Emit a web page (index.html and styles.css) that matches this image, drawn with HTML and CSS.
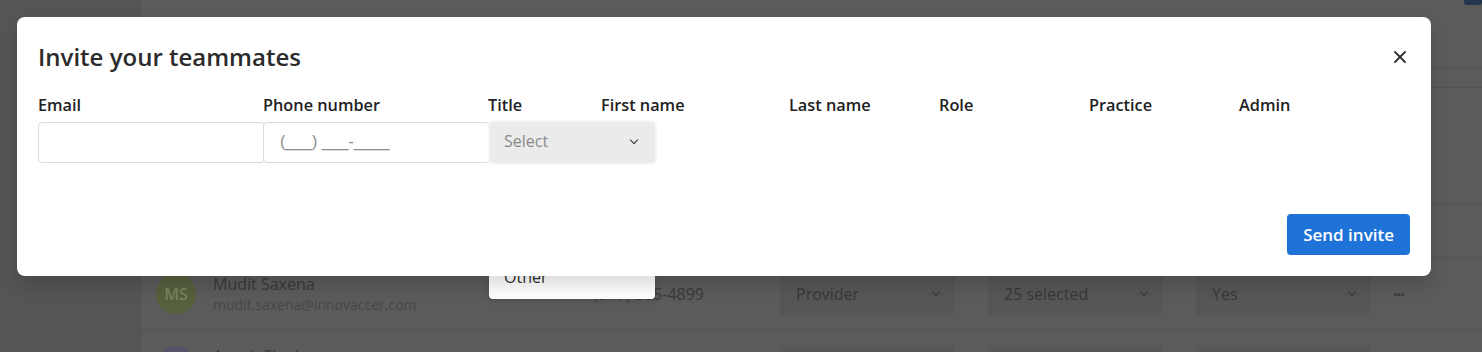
FILE: index.html
```html
<!DOCTYPE html>
<html lang="en">
<head>
<meta charset="utf-8">
<title>Invite your teammates</title>
<link rel="stylesheet" href="styles.css">
</head>
<body>
<div class="page">
  <aside class="sidebar"></aside>
  <main class="main">
    <div class="top-btn"></div>
    <div class="band band-top"></div>
    <div class="band band-head"></div>
    <div class="band band-a"></div>
    <div class="band band-b"></div>
    <div class="row">
      <div class="user">
        <div class="avatar avatar-green">MS</div>
        <div class="user-text">
          <div class="user-name">Mudit Saxena</div>
          <div class="user-mail">mudit.saxena@innovaccer.com</div>
        </div>
      </div>
      <div class="phone">(917) 555-4899</div>
      <div class="dd">Provider<span class="chev"></span></div>
      <div class="dd">25 selected<span class="chev"></span></div>
      <div class="dd">Yes<span class="chev"></span></div>
      <div class="more">···</div>
    </div>
    <div class="row">
      <div class="user">
        <div class="avatar avatar-purple">AS</div>
        <div class="user-text">
          <div class="user-name">Aanch Singh</div>
          <div class="user-mail">aanch.singh@innovaccer.com</div>
        </div>
      </div>
      <div class="phone">(917) 555-1209</div>
      <div class="dd">Provider<span class="chev"></span></div>
      <div class="dd">25 selected<span class="chev"></span></div>
      <div class="dd">Yes<span class="chev"></span></div>
      <div class="more">···</div>
    </div>
  </main>
</div>

<ul class="menu">
  <li>Dr.</li>
  <li>Mr.</li>
  <li>Mrs.</li>
  <li>Other</li>
</ul>

<div class="modal">
  <div class="modal-head">
    <h1 class="modal-title">Invite your teammates</h1>
    <button class="close" aria-label="Close">
      <svg width="12" height="12" viewBox="0 0 12 12"><path d="M1 1L11 11M11 1L1 11" stroke="#2f2f2f" stroke-width="1.8" stroke-linecap="round"/></svg>
    </button>
  </div>
  <div class="form">
    <div class="label">Email</div>
    <div class="label">Phone number</div>
    <div class="label">Title</div>
    <div class="label">First name</div>
    <div class="label">Last name</div>
    <div class="label">Role</div>
    <div class="label">Practice</div>
    <div class="label">Admin</div>
    <div class="cell"><div class="input"></div></div>
    <div class="cell"><div class="input input-phone">(___) ___-____</div></div>
    <div class="cell"><div class="select">Select<span class="chev chev-dark"></span></div></div>
  </div>
  <div class="modal-foot">
    <button class="btn-primary">Send invite</button>
  </div>
</div>
</body>
</html>
```

FILE: styles.css
```css
* { box-sizing: border-box; }
html, body { margin: 0; padding: 0; }
body {
  width: 1482px;
  height: 352px;
  overflow: hidden;
  background: #5b5b5b;
  font-family: "Open Sans", "Noto Sans", sans-serif;
  position: relative;
}

/* dimmed background page */
.page {
  display: flex;
  height: 352px;
  overflow: hidden;
}
.sidebar {
  width: 141px;
  background: #555555;
  border-right: 1px solid #515151;
}
.main {
  flex: 1;
  position: relative;
}
.top-btn {
  position: absolute;
  right: 0;
  top: -6px;
  width: 18px;
  height: 11px;
  background: #23364f;
  border-radius: 3px;
}
.band { border-bottom: 1px solid #525252; }
.band-top { height: 68px; }
.band-head { height: 20px; }
.band-a { height: 117px; }
.band-b { height: 53px; }
.row {
  display: flex;
  align-items: center;
  height: 72px;
  padding-left: 15px;
  border-bottom: 1px solid #525252;
}
.user {
  display: flex;
  align-items: center;
  gap: 17px;
  width: 400px;
}
.avatar {
  width: 40px;
  height: 40px;
  border-radius: 50%;
  display: flex;
  align-items: center;
  justify-content: center;
  font-size: 16px;
  font-weight: 600;
}
.avatar-green { background: #56603d; color: #77845b; }
.avatar-purple { background: #55526a; color: #77738d; }
.user-name { font-size: 16px; color: #383838; line-height: 22px; }
.user-mail { font-size: 14px; color: #464646; line-height: 20px; }
.phone {
  width: 148px;
  text-align: right;
  font-size: 16px;
  color: #3a3a3a;
  white-space: nowrap;
}
.dd {
  width: 175px;
  height: 42px;
  margin-left: 76px;
  background: #565656;
  border-radius: 4px;
  display: flex;
  align-items: center;
  justify-content: space-between;
  padding: 0 16px;
  font-size: 16px;
  color: #383838;
}
.dd + .dd { margin-left: 33px; }
.more {
  margin-left: 22px;
  color: #3c3c3c;
  font-size: 16px;
  font-weight: 700;
  letter-spacing: -1px;
}
.chev {
  width: 6px;
  height: 6px;
  border-right: 1.6px solid #3a3a3a;
  border-bottom: 1.6px solid #3a3a3a;
  transform: rotate(45deg);
  margin-top: -3px;
}
.chev-dark { border-color: #2f2f2f; }

/* options menu of the Title select (sits below the modal layer) */
.menu {
  position: absolute;
  left: 489px;
  top: 165px;
  width: 166px;
  height: 134px;
  margin: 0;
  padding: 7px 0;
  list-style: none;
  background: #ffffff;
  border-radius: 4px;
  box-shadow: 0 2px 6px rgba(0,0,0,0.12);
}
.menu li {
  height: 30px;
  line-height: 30px;
  padding: 0 15px;
  font-size: 16px;
  color: #2f2f2f;
}

/* modal */
.modal {
  position: absolute;
  left: 17px;
  top: 17px;
  width: 1414px;
  height: 259px;
  background: #ffffff;
  border-radius: 8px;
  box-shadow: 0 10px 18px rgba(0,0,0,0.14);
  padding: 24px 21px 21px;
  display: flex;
  flex-direction: column;
}
.modal-head {
  display: flex;
  align-items: center;
  justify-content: space-between;
  height: 32px;
}
.modal-title {
  margin: 0;
  font-size: 24px;
  font-weight: 600;
  color: #2b2b2b;
  line-height: 32px;
}
.close {
  border: 0;
  background: none;
  padding: 0;
  margin-right: 3px;
  width: 14px;
  height: 14px;
  display: flex;
  align-items: center;
  justify-content: center;
}
.form {
  margin-top: 20px;
  display: grid;
  grid-template-columns: 225px 225px 113px 188px 150px 150px 150px 1fr;
  grid-template-rows: 24px 41px;
  row-gap: 5px;
  flex: 1;
  align-content: start;
}
.label {
  font-size: 16.3px;
  font-weight: 600;
  color: #222222;
  line-height: 24px;
}
.cell { position: relative; }
.input {
  width: calc(100% + 2px);
  height: 41px;
  border: 1px solid #dadada;
  border-radius: 4px;
  background: #fff;
  font-size: 16px;
  color: #8a8a8a;
  display: flex;
  align-items: center;
  padding: 0 16px 2px;
}
.input-phone {
  font-family: "Liberation Sans", "Open Sans", sans-serif;
}
.select {
  width: 165px;
  height: 41px;
  margin-left: 2px;
  background: #ebebeb;
  border-radius: 4px;
  box-shadow: 0 0 0 2px #f6f6f6;
  display: flex;
  align-items: center;
  justify-content: space-between;
  padding: 0 18px 3px 14px;
  font-size: 16px;
  color: #8a8a8a;
  position: relative;
  z-index: 1;
}
.modal-foot {
  display: flex;
  justify-content: flex-end;
}
.btn-primary {
  height: 41px;
  padding: 0 16px;
  border: 0;
  border-radius: 4px;
  background: #1f73d8;
  color: #ffffff;
  font-family: inherit;
  font-size: 17px;
  font-weight: 600;
}
```
